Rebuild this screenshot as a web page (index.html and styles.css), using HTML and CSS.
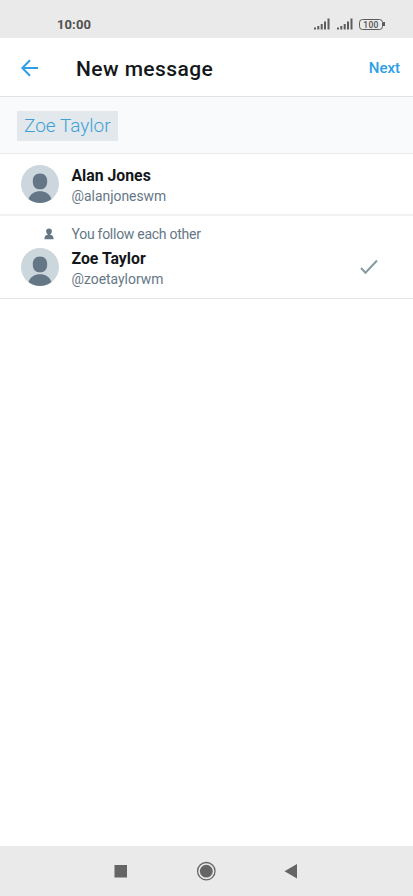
FILE: index.html
```html
<!DOCTYPE html>
<html lang="en">
<head>
<meta charset="utf-8">
<title>New message</title>
<link rel="stylesheet" href="styles.css">
</head>
<body>
<div class="screen">
  <div class="status">
    <span class="clock">10:00</span>
    <div class="indicators">
      <svg class="signal" width="16" height="12" viewBox="0 0 16 12"><path d="M0 9.500h2V11.500H0zM3.300 8h2v3.500h-2zM6.700 6h2v5.500h-2zM10 3.500h2v8h-2zM13.500 .5h2v11h-2z"/></svg>
      <svg class="signal" width="16" height="12" viewBox="0 0 16 12"><path d="M0 9.500h2V11.500H0zM3.300 8h2v3.500h-2zM6.700 6h2v5.500h-2zM10 3.500h2v8h-2zM13.500 .5h2v11h-2z"/></svg>
      <div class="battery"><span>100</span></div>
    </div>
  </div>
  <header class="bar">
    <svg class="back" width="18" height="18" viewBox="0 0 18 18"><path d="M17 9H1.500M9 1.300L1.300 9L9 16.700"/></svg>
    <h1>New message</h1>
    <span class="next">Next</span>
  </header>
  <div class="recipients"><span class="chip">Zoe Taylor</span></div>
  <div class="person first">
    <svg class="avatar" width="38" height="38" viewBox="0 0 38 38"><circle class="disc" cx="19" cy="19" r="19"/><path d="M19 8.500c-4.900 0-7.200 3.200-7.200 7.500 0 5 1.900 8.300 7.200 8.300s7.200-3.300 7.200-8.300c0-4.300-2.300-7.500-7.200-7.500zM7.500 34c2-5.200 6-7.700 11.500-7.700s9.500 2.500 11.500 7.700A19 19 0 0 1 7.500 34z"/></svg>
    <div class="info"><div class="name">Alan Jones</div><div class="handle">@alanjoneswm</div></div>
  </div>
  <div class="person second">
    <div class="social">
      <svg width="10" height="12" viewBox="0 0 10 12"><path d="M5 .5C3.200.5 2.100 1.600 2.100 3.200c0 1.300.6 2.500 1.600 3v.6C1.300 7.100.5 8.500.5 11.200h9C9.500 8.500 8.700 7.100 6.300 6.800v-.6c1-.5 1.600-1.700 1.600-3C7.900 1.600 6.800.5 5 .5z"/></svg>
      <span>You follow each other</span>
    </div>
    <div class="row">
      <svg class="avatar" width="38" height="38" viewBox="0 0 38 38"><circle class="disc" cx="19" cy="19" r="19"/><path d="M19 8.500c-4.900 0-7.200 3.200-7.200 7.500 0 5 1.900 8.300 7.200 8.300s7.200-3.300 7.200-8.300c0-4.300-2.300-7.500-7.200-7.500zM7.500 34c2-5.200 6-7.700 11.500-7.700s9.500 2.500 11.500 7.700A19 19 0 0 1 7.500 34z"/></svg>
      <div class="info"><div class="name">Zoe Taylor</div><div class="handle">@zoetaylorwm</div></div>
      <svg class="check" width="18" height="16" viewBox="0 0 18 16"><path d="M1 9l4.500 4.800L17 1.500"/></svg>
    </div>
  </div>
  <main class="empty"></main>
  <nav class="system">
    <svg width="413" height="50" viewBox="0 0 413 50"><path d="M114.500 19h12.500v12.500h-12.500zM284.500 25.200L297 18v14.500z"/><circle cx="206.300" cy="25.200" r="6.400"/><circle class="ring" cx="206.300" cy="25.200" r="8.700"/></svg>
  </nav>
</div>
</body>
</html>
```
FILE: styles.css
```css
* { box-sizing: border-box; }
body { margin: 0; font-family: Roboto, sans-serif; background: #fff; }
svg { display: block; flex: none; }
.screen { height: 896px; display: flex; flex-direction: column; overflow: hidden; }
.status { height: 38px; flex: none; background: #eaeaea; display: flex; justify-content: space-between; padding: 17px 28px 0 57px; color: #505050; }
.clock { font-size: 13px; line-height: 16px; font-weight: 700; letter-spacing: .1px; }
.indicators { display: flex; gap: 7px; padding-top: 2px; }
.signal { fill: #5c5c5c; margin: -1px -1px 0 1px; }
.battery { position: relative; width: 24px; height: 11px; border: 1.500px solid #5c5c5c; border-radius: 3.500px; margin-right: 2px; display: flex; align-items: center; justify-content: center; font-size: 8.500px; line-height: 8px; font-weight: 500; letter-spacing: .3px; }
.battery::after { content: ""; position: absolute; right: -3px; top: 2px; width: 2px; height: 4px; background: #5c5c5c; }
.bar { height: 59px; flex: none; border-bottom: 1px solid #dfe3e7; display: flex; align-items: center; padding: 2px 13px 0 21px; }
.back { fill: none; stroke: #2c9fe6; stroke-width: 2; margin-top: -1px; }
h1 { margin: 1px 0 0 37px; flex: 1; font-size: 21px; line-height: 24px; font-weight: 500; letter-spacing: .42px; color: #14171a; }
.next { font-size: 15px; line-height: 20px; font-weight: 500; color: #2c9fe6; }
.recipients { height: 57px; flex: none; background: #f8fafc; border-bottom: 1px solid #e8eaec; padding: 14px 17px; }
.chip { display: block; width: 101px; height: 30px; padding-left: 7px; background: #e2e8eb; color: #409fd8; font-size: 19px; line-height: 29px; font-weight: 300; white-space: nowrap; }
.person { flex: none; padding-left: 21px; color: #657786; }
.first { height: 62px; padding-top: 11px; display: flex; border-bottom: 2px solid #eff1f2; }
.avatar { fill: #657786; }
.disc { fill: #ccd6dd; }
.info { margin-left: 12.500px; flex: 1; }
.name { font-size: 15.800px; line-height: 22px; font-weight: 700; color: #14171a; }
.handle { font-size: 13.900px; line-height: 18px; }
.second { height: 83px; padding-top: 8px; border-bottom: 1px solid #e2e4e6; }
.social { display: flex; align-items: center; height: 20px; padding-left: 22.500px; gap: 18px; font-size: 14px; letter-spacing: -.27px; fill: #657786; }
.social span { margin-top: -1px; }
.row { display: flex; padding-top: 4px; }
.check { margin: 11px 35px 0 0; fill: none; stroke: #879aa2; stroke-width: 2; }
.empty { flex: 1; }
.system { height: 50px; flex: none; background: #eaeaea; fill: #656565; }
.ring { fill: none; stroke: #656565; stroke-width: 1.300; }
```
